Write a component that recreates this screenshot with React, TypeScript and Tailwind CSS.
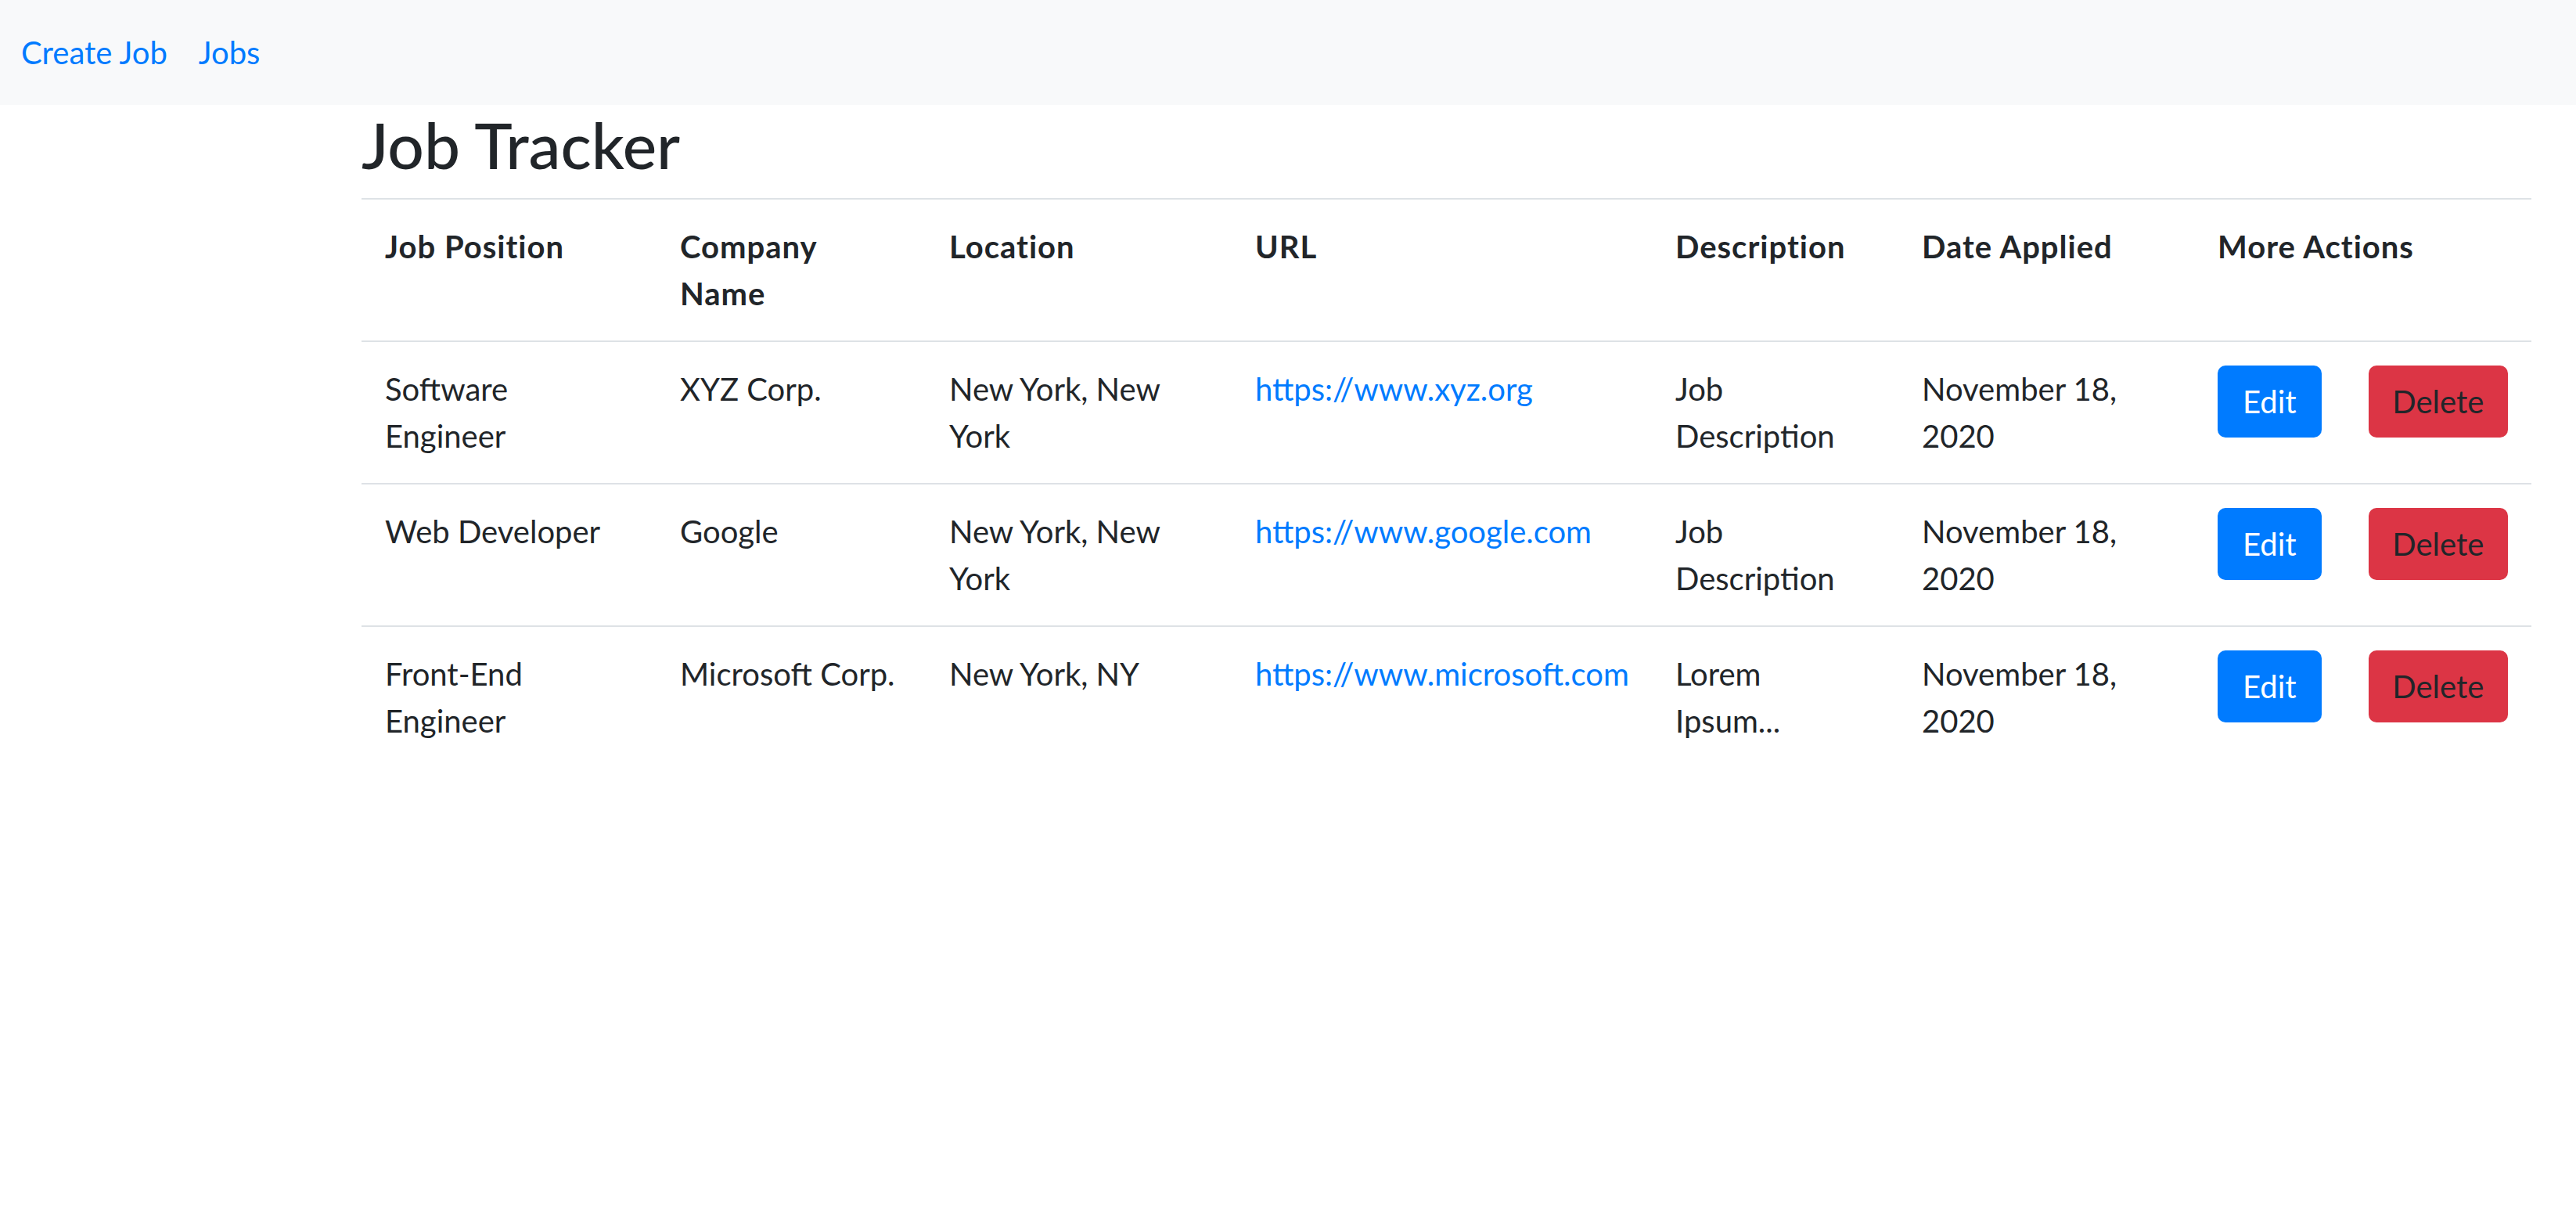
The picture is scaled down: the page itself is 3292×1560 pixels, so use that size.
type Job = {
  position: string;
  company: string;
  location: string;
  url: string;
  description: string;
  date: string;
};

const jobs: Job[] = [
  {
    position: 'Software Engineer',
    company: 'XYZ Corp.',
    location: 'New York, New York',
    url: 'https://www.xyz.org',
    description: 'Job Description',
    date: 'November 18, 2020',
  },
  {
    position: 'Web Developer',
    company: 'Google',
    location: 'New York, New York',
    url: 'https://www.google.com',
    description: 'Job Description',
    date: 'November 18, 2020',
  },
  {
    position: 'Front-End Engineer',
    company: 'Microsoft Corp.',
    location: 'New York, NY',
    url: 'https://www.microsoft.com',
    description: 'Lorem Ipsum...',
    date: 'November 18, 2020',
  },
];

const headers = ['Job Position', 'Company Name', 'Location', 'URL', 'Description', 'Date Applied', 'More Actions'];

const cell = 'p-[30px] text-left align-top';

export default function App() {
  return (
    <div className="min-h-screen bg-white font-['Lato',sans-serif] text-[40px] leading-[60px] text-[#212529]">
      <nav className="flex h-[134px] items-center gap-[40px] bg-[#f8f9fa] px-[27px]">
        <a href="#" className="text-[#007bff]">
          Create Job
        </a>
        <a href="#" className="text-[#007bff]">
          Jobs
        </a>
      </nav>

      <main className="ml-[462px] w-[2773px]">
        <h2 className="mt-[2px] mb-[21px] text-[82px] font-medium leading-[96px]">Job Tracker</h2>

        <table className="w-full table-fixed border-collapse">
          <colgroup>
            <col className="w-[377px]" />
            <col className="w-[344px]" />
            <col className="w-[391px]" />
            <col className="w-[537px]" />
            <col className="w-[315px]" />
            <col className="w-[378px]" />
            <col className="w-[431px]" />
          </colgroup>
          <thead>
            <tr className="border-t-2 border-[#dee2e6]">
              {headers.map((h) => (
                <th key={h} className={`${cell} font-bold tracking-[0.025em]`}>
                  {h}
                </th>
              ))}
            </tr>
          </thead>
          <tbody>
            {jobs.map((job) => (
              <tr key={job.url} className="border-t-2 border-[#dee2e6]">
                <td className={cell}>{job.position}</td>
                <td className={cell}>{job.company}</td>
                <td className={cell}>{job.location}</td>
                <td className={`${cell} whitespace-nowrap`}>
                  <a href="#" className="text-[#007bff]">
                    {job.url}
                  </a>
                </td>
                <td className={`${cell} pr-[40px]`}>{job.description}</td>
                <td className={cell}>{job.date}</td>
                <td className={cell}>
                  <div className="flex gap-[60px]">
                    <button className="h-[92px] w-[133px] rounded-[10px] bg-[#007bff] text-white">Edit</button>
                    <button className="h-[92px] w-[179px] rounded-[10px] bg-[#dc3545] text-[#212529]">Delete</button>
                  </div>
                </td>
              </tr>
            ))}
          </tbody>
        </table>
      </main>
    </div>
  );
}
